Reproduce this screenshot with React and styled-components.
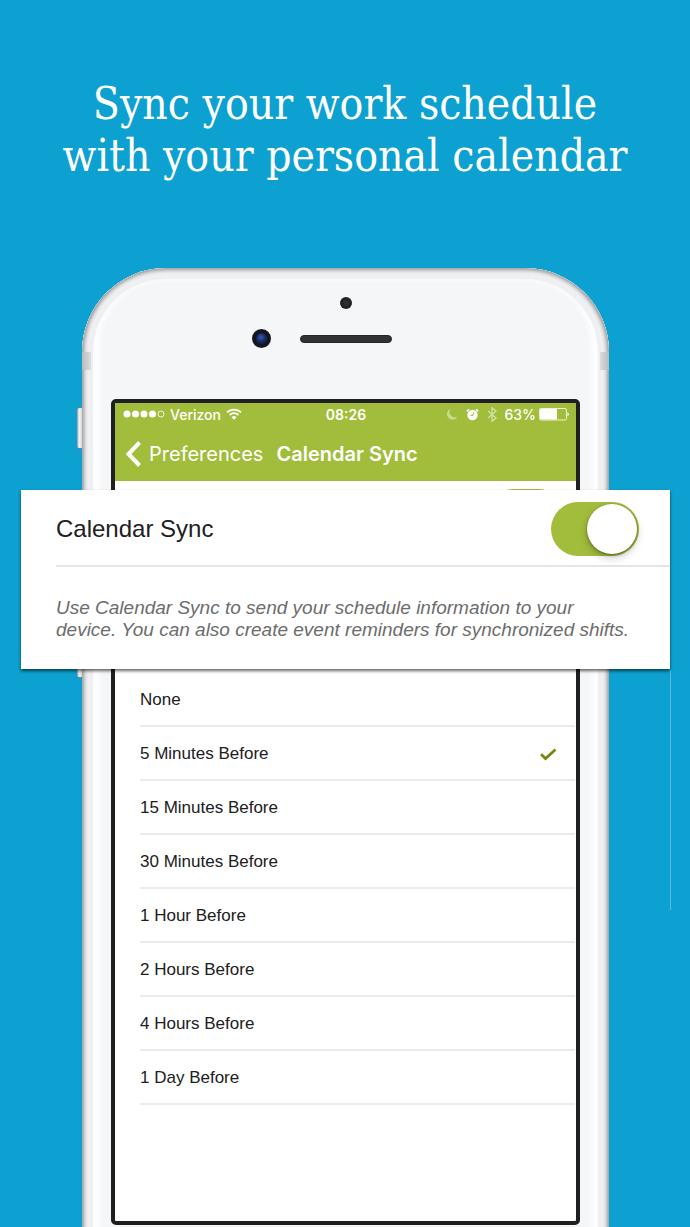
import React, { useState } from "react";
import styled, { createGlobalStyle, css } from "styled-components";

const green = "#a1bd3b";
const sans = `"Liberation Sans", Arial, sans-serif`;
const ui = `Inter, "Liberation Sans", sans-serif`;

const GlobalStyle = createGlobalStyle`
  *, *::before, *::after { box-sizing: border-box; }
  body { margin: 0; background: #0ca1d0; }
`;

const Page = styled.main`
  display: flex;
  flex-direction: column;
  min-height: 100vh;
  background: #0ca1d0;
  font-family: ${sans};
  overflow: hidden;
`;

const Headline = styled.h1`
  margin: 0;
  padding: 78px 20px 86px;
  color: #fff;
  text-align: center;
  font-family: "DejaVu Serif Condensed", "DejaVu Serif", serif;
  font-weight: 400;
  font-size: 44px;
  line-height: 52px;
`;

const Line = styled.span`
  display: block;
`;

const Stage = styled.div`
  position: relative;
  flex: 1;
  display: flex;
  padding: 0 81px 0 82px;
`;

const Phone = styled.section`
  position: relative;
  flex: 1;
  min-width: 0;
  display: flex;
  flex-direction: column;
  margin-bottom: -30px;
  padding: 0 29px 32px;
  border-radius: 84px 84px 0 0;
  background: #f5f6f8;
  box-shadow:
    inset 0 0 4px 2px #8f9193,
    inset 0 0 3px 7px #f3f3f5,
    inset 0 0 1px 11px #eeeff2,
    inset 0 -6px 5px 18px #fdfdfe;
`;

const Antenna = styled.span`
  position: absolute;
  top: 84px;
  ${(p) => p.$side}: 0;
  width: 9px;
  height: 18px;
  background: linear-gradient(to ${(p) => p.$side}, #dcdddf, #b9babc);
`;

const SideButton = styled.span`
  position: absolute;
  left: -5px;
  top: ${(p) => p.$top}px;
  width: 5px;
  height: 42px;
  border-radius: 3px 0 0 3px;
  background: linear-gradient(to right, #8b9296, #f4f5f6 40%, #d4d7d9);
  border: solid #77868d;
  border-width: 1px 0;
`;

const Bezel = styled.div`
  height: 131px;
  padding-top: 29px;
  display: flex;
  flex-direction: column;
  align-items: center;
  gap: 20px;
`;

const Sensor = styled.span`
  width: 12px;
  height: 12px;
  border-radius: 50%;
  background: radial-gradient(circle, #303336, #1b1d1f 70%);
`;

const BezelRow = styled.div`
  align-self: stretch;
  display: grid;
  grid-template-columns: 1fr 92px 1fr;
  align-items: center;
  column-gap: 29px;
`;

const Lens = styled.span`
  justify-self: end;
  width: 19px;
  height: 19px;
  border-radius: 50%;
  border: 4px solid #14171f;
  background: radial-gradient(circle at 45% 40%, #2f4f9f 0 15%, #1b2a62 45%, #101a40);
`;

const Speaker = styled.span`
  height: 8px;
  border-radius: 4px;
  background: #303335;
  border: 1px solid #232526;
`;

const Screen = styled.div`
  flex: 1;
  display: flex;
  flex-direction: column;
  border: 4px solid #1f1f20;
  border-radius: 5px;
  background: #fff;
  overflow: hidden;
`;

const TopBar = styled.header`
  background: ${green};
  color: #fff;
  font-family: ${ui};
  padding: 0 7px 0 8px;
`;

const StatusBar = styled.div`
  display: grid;
  grid-template-columns: 1fr auto 1fr;
  align-items: center;
  height: 24px;
  padding-bottom: 2px;
  font-size: 14px;
  font-weight: 500;
`;

const StatusGroup = styled.div`
  display: flex;
  align-items: center;
  gap: ${(p) => p.$gap}px;
  justify-content: ${(p) => (p.$end ? "flex-end" : "flex-start")};
`;

const Time = styled.time`
  font-weight: 600;
`;

const NavBar = styled.nav`
  display: flex;
  align-items: center;
  height: 54px;
  padding-left: 2px;
  gap: 13px;
`;

const Back = styled.a`
  display: flex;
  align-items: center;
  gap: 7px;
  color: inherit;
  text-decoration: none;
  font-size: 20px;
`;

const NavTitle = styled.h2`
  margin: 0;
  font-size: 20px;
  font-weight: 600;
`;

const Covered = styled.div`
  height: 192px;
  padding: 8px 18px 0 0;
  display: flex;
  justify-content: flex-end;
`;

const MiniTrack = styled.span`
  width: 64px;
  height: 38px;
  border-radius: 19px;
  background: ${green};
`;

const Options = styled.fieldset`
  margin: 0;
  padding: 0 1px 113px 25px;
  border: 0;
  min-width: 0;
`;

const Option = styled.label`
  display: flex;
  align-items: center;
  justify-content: space-between;
  height: 54px;
  padding: 2px 18px 0 0;
  border-bottom: 2px solid #ebebec;
  color: #202020;
  font-size: 17px;
  cursor: pointer;
`;

const hiddenInput = css`
  appearance: none;
  margin: 0;
  width: 0;
  height: 0;
`;

const Radio = styled.input`
  ${hiddenInput}
  order: 1;
  & + svg { order: 2; visibility: hidden; }
  &:checked + svg { visibility: visible; }
`;

const OptionText = styled.span`
  flex: 1;
`;

const Callout = styled.section`
  position: absolute;
  top: 222px;
  left: 21px;
  right: 20px;
  padding-left: 35px;
  background: #fff;
  box-shadow: 0 2px 3px rgba(0, 0, 0, 0.6);
`;

const CalloutRow = styled.label`
  display: flex;
  align-items: center;
  justify-content: space-between;
  height: 77px;
  padding: 2px 31px 0 0;
  border-bottom: 2px solid #e4e5e6;
  color: #202020;
  font-size: 24px;
`;

const Switch = styled.input`
  appearance: none;
  margin: 0;
  width: 88px;
  height: 54px;
  padding: 2px;
  border-radius: 27px;
  background: ${(p) => (p.checked ? green : "#d8d8d8")};
  display: flex;
  justify-content: ${(p) => (p.checked ? "flex-end" : "flex-start")};
  cursor: pointer;
  &::before {
    content: "";
    width: 50px;
    height: 50px;
    border-radius: 50%;
    background: #fff;
    box-shadow: 0 4px 9px rgba(0, 0, 0, 0.2), 0 1px 3px rgba(40, 60, 0, 0.5);
  }
`;

const Note = styled.p`
  margin: 0;
  padding: 30px 36px 28px 0;
  color: #6c6c6c;
  font-size: 19px;
  line-height: 22px;
  font-style: italic;
`;

const Hairline = styled.span`
  position: absolute;
  top: 402px;
  right: 19px;
  width: 1px;
  height: 240px;
  background: #5cb9d8;
`;

const SignalDots = () => (
  <svg width="42" height="8" viewBox="0 0 42 8" fill="#fff" aria-hidden="true">
    {[4, 12.500, 21, 29.500].map((x) => (
      <circle key={x} cx={x} cy="4" r="3.500" />
    ))}
    <circle cx="38" cy="4" r="3" fill="none" stroke="#fff" strokeWidth="1" opacity="0.8" />
  </svg>
);

const WifiIcon = () => (
  <svg width="16" height="12" viewBox="0 0 16 12" fill="none" stroke="#fff" strokeWidth="1.8" aria-hidden="true">
    <path d="M1 4.4a10 10 0 0 1 14 0M3.6 7a6.3 6.3 0 0 1 8.8 0" />
    <path d="M8 11.7 5.5 9.2a3.6 3.6 0 0 1 5 0z" fill="#fff" stroke="none" />
  </svg>
);

const MoonIcon = () => (
  <svg width="11" height="12" viewBox="0 0 11 12" aria-hidden="true">
    <path d="M3.6.7A5.6 5.6 0 1 0 10.6 8.4 5.3 5.3 0 0 1 3.6.7z" fill="#fff" opacity="0.45" />
  </svg>
);

const AlarmIcon = () => (
  <svg width="13" height="13" viewBox="0 0 13 13" aria-hidden="true">
    <circle cx="6.5" cy="7" r="5.2" fill="#fff" />
    <path d="M.8 3.4 3 1.200M12.2 3.4 10 1.200" stroke="#fff" strokeWidth="1.600" />
    <path d="M8 4.500 6.500 7.500H4.600" fill="none" stroke={green} strokeWidth="1.100" />
  </svg>
);

const BluetoothIcon = () => (
  <svg width="10" height="15" viewBox="0 0 10 15" fill="none" stroke="#fff" strokeWidth="1.300" opacity="0.55" aria-hidden="true">
    <path d="M1 4l8 7-4 3.300V.7L9 4l-8 7" />
  </svg>
);

const BatteryIcon = () => (
  <svg width="30" height="13" viewBox="0 0 30 13" aria-hidden="true">
    <rect x=".5" y=".5" width="27" height="11.500" rx="1.500" fill="none" stroke="#fff" opacity="0.8" />
    <rect x="1" y="1" width="17" height="10.500" rx="1" fill="#fff" />
    <path d="M28.500 4.200a2.400 2.400 0 0 1 0 4.200z" fill="#fff" />
  </svg>
);

const BackIcon = () => (
  <svg width="17" height="26" viewBox="0 0 17 26" fill="none" stroke="#fff" strokeWidth="4" aria-hidden="true">
    <path d="M14.500 1.500 3.500 13l11 11.500" />
  </svg>
);

const CheckIcon = () => (
  <svg width="17" height="13" viewBox="0 0 17 13" fill="none" stroke="#6f8c0e" strokeWidth="2.800" aria-hidden="true">
    <path d="M1 6.300 5.500 10.500 15.500 1.500" />
  </svg>
);

const reminders = [
  "None",
  "5 Minutes Before",
  "15 Minutes Before",
  "30 Minutes Before",
  "1 Hour Before",
  "2 Hours Before",
  "4 Hours Before",
  "1 Day Before",
];

export default function App() {
  const [synced, setSynced] = useState(true);
  const [reminder, setReminder] = useState(reminders[1]);

  return (
    <Page>
      <GlobalStyle />
      <Headline>
        <Line>Sync your work schedule</Line>
        <Line>with your personal calendar</Line>
      </Headline>
      <Stage>
        <Phone>
          <SideButton $top={139} />
          <SideButton $top={368} />
          <Antenna $side="left" />
          <Antenna $side="right" />
          <Bezel>
            <Sensor />
            <BezelRow>
              <Lens />
              <Speaker />
            </BezelRow>
          </Bezel>
          <Screen>
            <TopBar>
              <StatusBar>
                <StatusGroup $gap={5}>
                  <SignalDots />
                  <span>Verizon</span>
                  <WifiIcon />
                </StatusGroup>
                <Time>08:26</Time>
                <StatusGroup $gap={8} $end>
                  <MoonIcon />
                  <AlarmIcon />
                  <BluetoothIcon />
                  <StatusGroup $gap={3}>
                    <span>63%</span>
                    <BatteryIcon />
                  </StatusGroup>
                </StatusGroup>
              </StatusBar>
              <NavBar>
                <Back href="#preferences">
                  <BackIcon />
                  Preferences
                </Back>
                <NavTitle>Calendar Sync</NavTitle>
              </NavBar>
            </TopBar>
            <Covered>
              <MiniTrack />
            </Covered>
            <Options aria-label="Event reminder">
              {reminders.map((name) => (
                <Option key={name}>
                  <OptionText>{name}</OptionText>
                  <Radio
                    type="radio"
                    name="reminder"
                    checked={reminder === name}
                    onChange={() => setReminder(name)}
                  />
                  <CheckIcon />
                </Option>
              ))}
            </Options>
          </Screen>
        </Phone>
        <Hairline />
        <Callout>
          <CalloutRow>
            Calendar Sync
            <Switch
              type="checkbox"
              role="switch"
              checked={synced}
              onChange={(e) => setSynced(e.target.checked)}
            />
          </CalloutRow>
          <Note>
            Use Calendar Sync to send your schedule information to your device. You can also create
            event reminders for synchronized shifts.
          </Note>
        </Callout>
      </Stage>
    </Page>
  );
}
